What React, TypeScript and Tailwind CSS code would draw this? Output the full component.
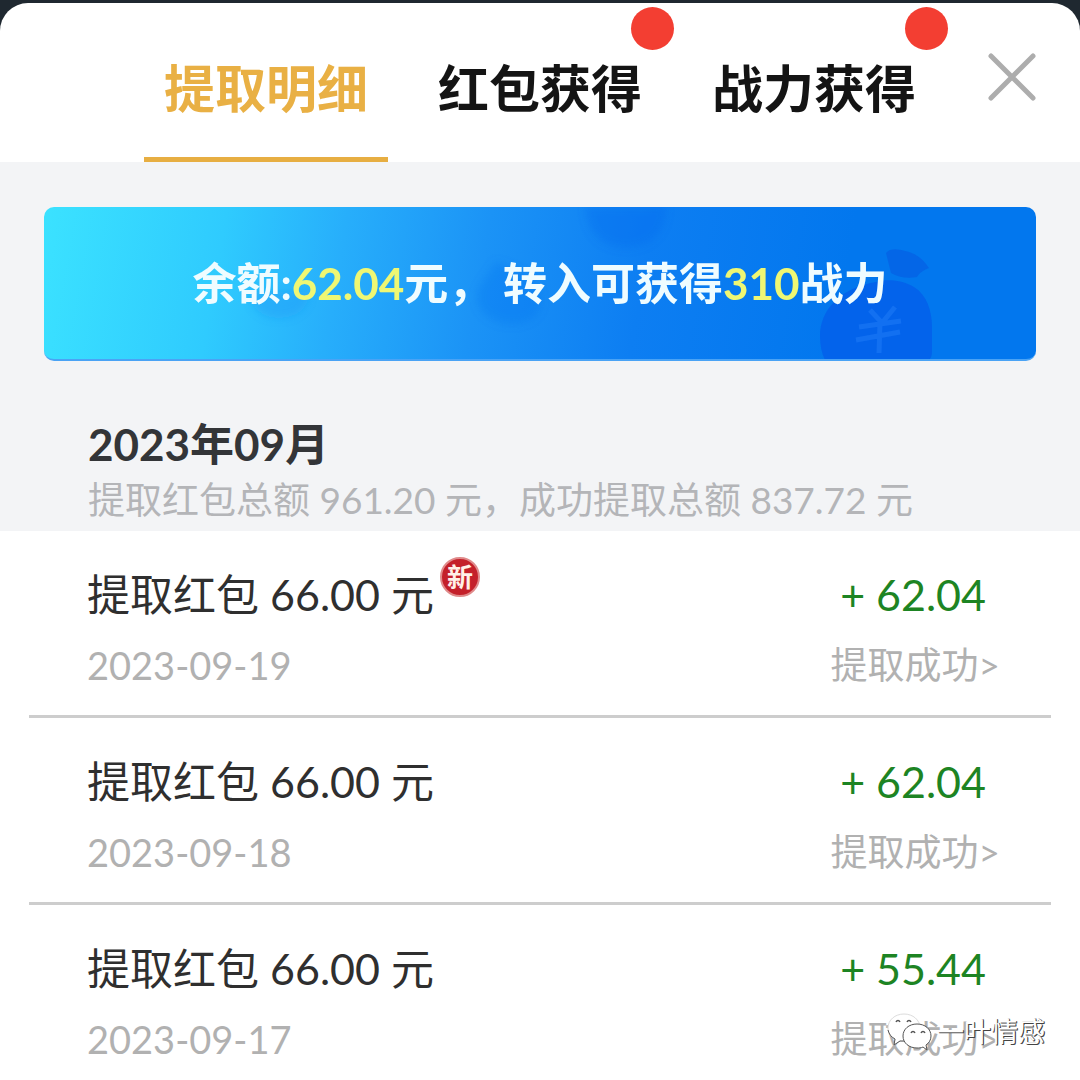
import { useState } from 'react'

const TABS = [
  { id: 'withdraw', label: '提取明细', unread: false },
  { id: 'packet', label: '红包获得', unread: true },
  { id: 'power', label: '战力获得', unread: true },
]

interface WithdrawRecord {
  date: string
  amount: string
  received: string
  isNew?: boolean
}

const RECORDS: WithdrawRecord[] = [
  { date: '2023-09-19', amount: '66.00', received: '62.04', isNew: true },
  { date: '2023-09-18', amount: '66.00', received: '62.04' },
  { date: '2023-09-17', amount: '66.00', received: '55.44' },
]

function CloseIcon() {
  return (
    <svg viewBox="0 0 48 48" className="size-12" fill="none" stroke="#adadad" strokeWidth="5" strokeLinecap="round">
      <path d="M3 3 45 45M45 3 3 45" />
    </svg>
  )
}

function MoneyBags() {
  return (
    <svg
      viewBox="0 0 992 154"
      preserveAspectRatio="xMaxYMid slice"
      className="absolute inset-0 h-full w-full"
      aria-hidden="true"
    >
      <defs>
        <filter id="soft" x="-30%" y="-30%" width="160%" height="160%">
          <feGaussianBlur stdDeviation="4" />
        </filter>
      </defs>
      <g filter="url(#soft)">
        <path d="M542 0h80c0 28-18 42-40 42S542 28 542 0Z" fill="#0a68ee" opacity=".3" />
        <path d="M452 56l22 8c18 10 26 24 22 38-5 16-30 20-46 12-18-8-22-26-10-40Z" fill="#0c6ff2" opacity=".3" />
        <path d="M205 86h60c0 16-12 26-30 26s-28-10-30-26Z" fill="#1690f4" opacity=".3" />
      </g>
      <path
        d="M842 47c4-5 12-4 19-2 11 2 19 9 24 17-5 2-9 4-12 9-10 2-19 0-26-4Z"
        fill="#0560e4"
        opacity=".75"
      />
      <path
        d="M832 76c13-4 28-1 38 5 13 8 18 24 18 40v24c0 5-1 7-3 9H781c-3-6-5-14-5-24 0-26 20-48 56-54Z"
        fill="#035fea"
        opacity=".85"
      />
      <path
        d="M826 104l12 13 13-16M815 121l42-6M812 134l44-8M836 116l-1 31"
        fill="none"
        stroke="#1673f3"
        strokeWidth="5"
        opacity=".8"
      />
    </svg>
  )
}

function WechatIcon() {
  return (
    <svg viewBox="0 0 46 40" className="h-10 w-[46px]" fill="#ffffff" aria-hidden="true">
      <path
        d="M17 2C8 2 1 8 1 16c0 5 3 9 7 11l-1 6 6-4c8 2 20-2 20-13C33 8 26 2 17 2Z"
        stroke="#dcdcdc"
      />
      <path d="M1 18c1 4 3 7 7 9l-1 6 6-4h4" fill="none" stroke="#555555" />
      <path
        d="M30 12c-8 0-14 5-14 12s6 12 14 12c2 0 4 0 6-1l4 3-1-5c3-2 5-5 5-9 0-7-6-12-14-12Z"
        stroke="#555555"
      />
      <path
        d="M9 10c1-2 3-2 4 0M20 10c1-2 3-2 4 0M24 21c1-2 3-2 4 0M34 21c1-2 3-2 4 0"
        fill="none"
        stroke="#555555"
        strokeWidth="1.5"
      />
    </svg>
  )
}

function RecordRow({ record }: { record: WithdrawRecord }) {
  return (
    <li className="mx-[29px] border-b-[3px] border-[#cdcdcd] pt-8 pr-[51px] pb-[26px] pl-[58px] last:border-0 last:pb-0">
      <div className="flex items-start justify-between text-[43px] leading-[64px]">
        <h3 className="flex items-start gap-1.5 text-[#2f2f2f]">
          提取红包 {record.amount} 元
          {record.isNew && (
            <span className="-mt-1.5 flex size-10 items-center justify-center rounded-full border-2 border-[#e08a8a] bg-[#c4202a] text-[26px] leading-none font-bold text-[#fff0e8]">
              新
            </span>
          )}
        </h3>
        <p className="pr-3.5 text-[#1d8423]">+ {record.received}</p>
      </div>
      <div className="mt-3.5 flex items-center justify-between leading-[48px] text-[#b1b1b1]">
        <time dateTime={record.date} className="text-[38px]">
          {record.date}
        </time>
        <button type="button" className="cursor-pointer text-[37px]">
          提取成功&gt;
        </button>
      </div>
    </li>
  )
}

export default function App() {
  const [activeTab, setActiveTab] = useState('withdraw')

  return (
    <div className="relative flex min-h-screen flex-col bg-[#1f2830] pt-[3px] font-['Lato','Noto_Sans_CJK_SC',sans-serif]">
      <main className="flex-1 overflow-hidden rounded-t-[28px] bg-white">
        <header className="relative flex justify-center">
          <nav className="flex gap-[30px]">
            {TABS.map((tab) => (
              <button
                key={tab.id}
                type="button"
                onClick={() => setActiveTab(tab.id)}
                className={`relative cursor-pointer border-b-[5px] px-5 pt-[58px] pb-10 text-[51px] leading-[56px] font-bold whitespace-nowrap ${
                  activeTab === tab.id ? 'border-[#e7ae42] text-[#e9b044]' : 'border-transparent text-[#141414]'
                }`}
              >
                {tab.label}
                {tab.unread && <span className="absolute top-1 -right-3 size-[43px] rounded-full bg-[#f33e32]" />}
              </button>
            ))}
          </nav>
          <button type="button" aria-label="关闭" className="absolute top-[50px] right-11 cursor-pointer">
            <CloseIcon />
          </button>
        </header>

        <section className="bg-[#f3f4f6] px-11 pt-[45px] pb-1.5">
          <div className="relative overflow-hidden rounded-[10px] border-b-2 border-[#4aa3f5] bg-[linear-gradient(100deg,#3be2ff_0%,#2fcbfe_18%,#27aefb_30%,#1b93f6_44%,#0d7ef2_60%,#0277ee_80%,#0277ee_100%)]">
            <MoneyBags />
            <p className="relative py-11 text-center text-[44px] leading-[64px] font-bold text-[#effcff]">
              余额:<span className="text-[#eff773]">62.04</span>元， 转入可获得
              <span className="text-[#eff773]">310</span>战力
            </p>
          </div>
          <div className="px-11 pt-[53px]">
            <h2 className="text-[44px] leading-[60px] font-bold text-[#333538]">2023年09月</h2>
            <p className="pt-px text-[37px] leading-[50px] text-[#b4b5b8]">
              提取红包总额 961.20 元，成功提取总额 837.72 元
            </p>
          </div>
        </section>

        <ul>
          {RECORDS.map((record) => (
            <RecordRow key={record.date} record={record} />
          ))}
        </ul>
      </main>

      <div className="absolute right-[35px] bottom-7 flex items-center gap-1 text-[27px] leading-10 text-white [text-shadow:1px_1px_0_#444,1px_0_0_#555]">
        <WechatIcon />
        一叶情感
      </div>
    </div>
  )
}
